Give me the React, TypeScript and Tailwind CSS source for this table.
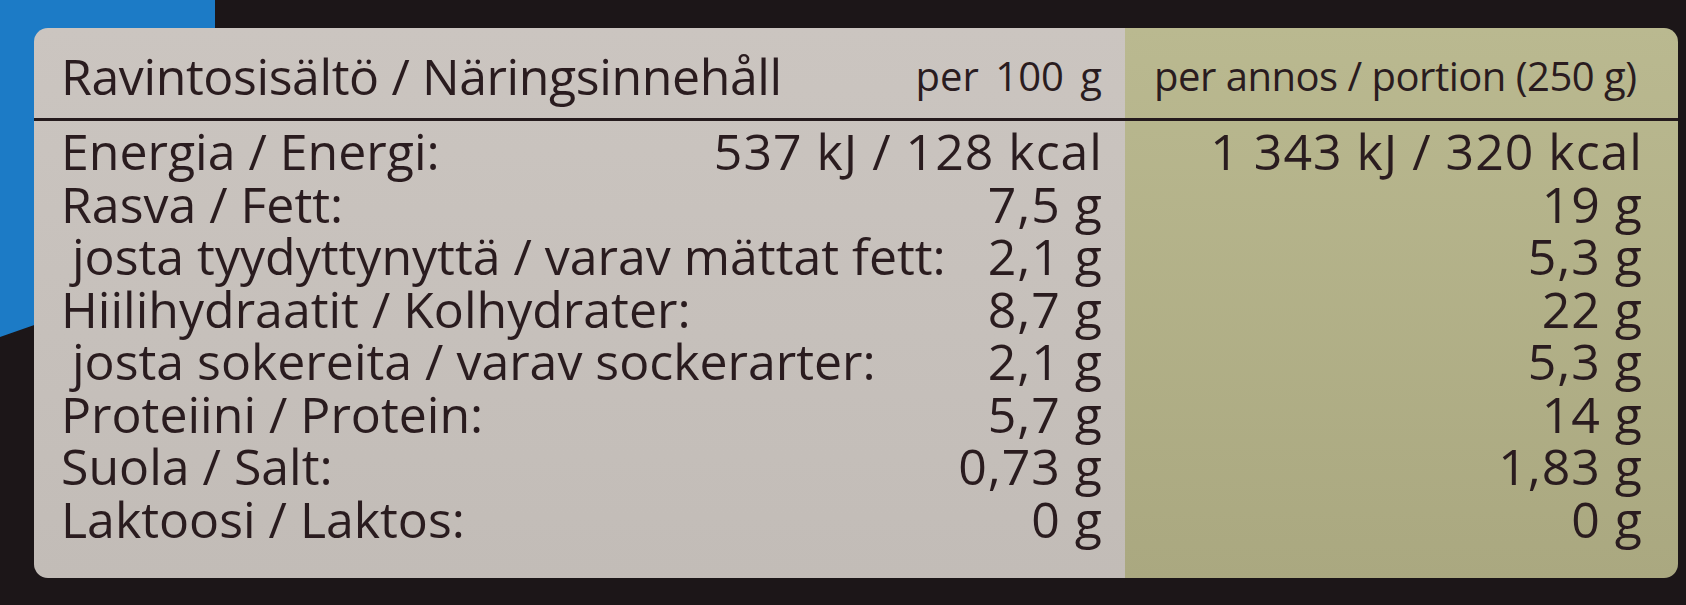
import React from "react";

type Row = { label: string; indent?: boolean; a: string; b: string };

const rows: Row[] = [
  { label: "Energia / Energi:", a: "537 kJ / 128 kcal", b: "1 343 kJ / 320 kcal" },
  { label: "Rasva / Fett:", a: "7,5 g", b: "19 g" },
  { label: "josta tyydyttynyttä / varav mättat fett:", indent: true, a: "2,1 g", b: "5,3 g" },
  { label: "Hiilihydraatit / Kolhydrater:", a: "8,7 g", b: "22 g" },
  { label: "josta sokereita / varav sockerarter:", indent: true, a: "2,1 g", b: "5,3 g" },
  { label: "Proteiini / Protein:", a: "5,7 g", b: "14 g" },
  { label: "Suola / Salt:", a: "0,73 g", b: "1,83 g" },
  { label: "Laktoosi / Laktos:", a: "0 g", b: "0 g" },
];

export default function App() {
  return (
    <div className="relative w-[1686px] h-[605px] overflow-hidden bg-[#1c1618] font-['Open_Sans',sans-serif] text-[#2a1c1f]">
      <div className="absolute left-0 top-0 w-[220px] h-[340px] bg-[#1c7bc6] [clip-path:polygon(0_0,215px_0,215px_40px,40px_40px,40px_323px,0_337px)]" />
      <div className="relative ml-[34px] mt-[28px] w-[1644px] h-[550px] rounded-[14px] overflow-hidden flex">
        <div className="w-[1091px] flex flex-col bg-gradient-to-b from-[#cbc5c0] to-[#c2bcb7]">
          <div className="h-[93px] flex items-center justify-between pl-[27px] pr-[23px] pt-[6px] border-b-[3px] border-[#241a1c]">
            <span className="text-[50px] font-medium tracking-[-0.4px]">Ravintosisältö / Näringsinnehåll</span>
            <span className="text-[40px] font-medium [word-spacing:6px]">per 100 g</span>
          </div>
          <div className="pt-[4px] flex flex-col">
            {rows.map((r, i) => (
              <div key={i} className="h-[52.5px] leading-[52.5px] text-[50px] flex justify-between pr-[22px] whitespace-nowrap">
                <span className={r.indent ? "pl-[38px]" : "pl-[27px]"}>{r.label}</span>
                <span className="tracking-[1px]">{r.a}</span>
              </div>
            ))}
          </div>
        </div>
        <div className="flex-1 flex flex-col bg-gradient-to-b from-[#bab990] to-[#aaa880]">
          <div className="h-[93px] flex items-center pl-[29px] pt-[6px] border-b-[3px] border-[#241a1c]">
            <span className="text-[40px] font-medium tracking-[-0.5px]">per annos / portion (250 g)</span>
          </div>
          <div className="pt-[4px] flex flex-col">
            {rows.map((r, i) => (
              <div key={i} className="h-[52.5px] leading-[52.5px] text-[50px] flex justify-end pr-[35px] whitespace-nowrap">
                <span className="tracking-[1px]">{r.b}</span>
              </div>
            ))}
          </div>
        </div>
      </div>
    </div>
  );
}
